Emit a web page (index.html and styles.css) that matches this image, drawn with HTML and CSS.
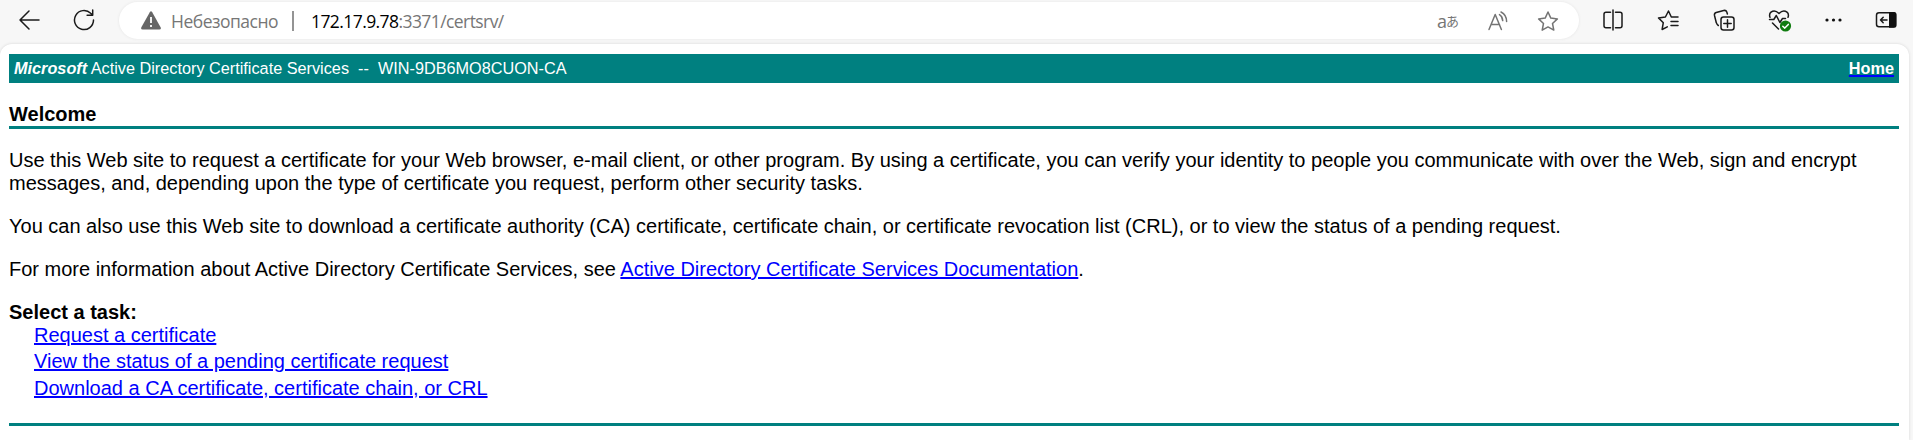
FILE: index.html
```
<!DOCTYPE html>
<html lang="ru">
<head>
<meta charset="utf-8">
<title>Microsoft Active Directory Certificate Services</title>
<link rel="stylesheet" href="styles.css">
</head>
<body>
<header class="toolbar">
  <svg class="icon back" viewBox="0 0 22 22"><path d="M21 11H2M11 2L2 11l9 9"/></svg>
  <svg class="icon reload" viewBox="0 0 22 22"><path d="M20.500 11A9.500 9.500 0 1 1 17.700 4.300L19.500 6M19.700 1v5.300h-5.600"/></svg>
  <div class="omnibox">
    <svg class="warning" viewBox="0 0 20 19"><path class="shape" d="M8.8 1.2Q10-.6 11.2 1.2L19.6 16.3Q20.5 18.5 18.3 18.5H1.7Q-.5 18.5.4 16.3Z"/><path class="mark" d="M10 6v6M10 14v2"/></svg>
    <span class="status">Небезопасно</span>
    <span class="divider"></span>
    <span class="url"><b class="host">172.17.9.78</b>:3371/certsrv/</span>
    <span class="translate"><span class="latin">a</span><span class="kana">あ</span></span>
    <svg class="icon soft read" viewBox="0 0 20 20"><path d="M1 18.5L7.200 3.500l6.200 15M3 13.500h8.500M11.500 3.600q3 1.700 3.200 6M13 1q5.600 2.800 5.600 9.600"/></svg>
    <svg class="icon soft star" viewBox="0 0 22 22"><path d="M11 2l2.800 6.100 6.600.8-4.900 4.600 1.300 6.600-5.800-3.200-5.800 3.200 1.300-6.600L1.600 8.900l6.600-.8Z"/></svg>
  </div>
  <div class="actions">
    <svg class="icon" viewBox="0 0 22 22"><path d="M11 1v20M8.500 3.200H4Q2 3.200 2 5.200v11.600q0 2 2 2h4.500M13.500 3.200H18q2 0 2 2v11.600q0 2-2 2h-4.500"/></svg>
    <svg class="icon" viewBox="0 0 22 22"><path d="M14.300 8L11.500 2 8.400 8 1.500 8.900l4.800 4.800-1.200 6.800 5.200-2.700M14.300 8H21M14 12.500h7M14 16.500h7"/></svg>
    <svg class="icon collections" viewBox="0 0 22 22"><rect x="8" y="8" width="13" height="13" rx="2.500"/><path d="M14.500 10.800v7.400M10.800 14.500h7.400M5.300 16.500Q3.700 15.500 3.300 13.700L1.500 6.500Q1 4.200 3.200 3.500l7.500-2q2.300-.6 3.100 1.500l.6 2"/></svg>
    <svg class="icon health" viewBox="0 0 24 24"><path d="M2 8.300Q.8 5 3 3.200q3.800-3 8 1.300 4.200-4.300 8-1.300 2.200 1.800 1 5.100M1.500 10.500h4.300l2.500-4 3.600 7 2.600-4h3M4.500 14l6 6"/><circle class="badge" cx="17.500" cy="17" r="5.600"/><path class="tick" d="M14.800 17.200l2 1.900 3.500-3.700"/></svg>
    <svg class="icon" viewBox="0 0 22 22"><g class="dots"><circle cx="4" cy="11" r="1.600"/><circle cx="10.500" cy="11" r="1.600"/><circle cx="17" cy="11" r="1.600"/></g></svg>
    <svg class="icon sidebar" viewBox="0 0 22 22"><rect x="1.500" y="3.800" width="19" height="14" rx="2.500"/><path class="dots" d="M14 3h5q2.500 0 2.500 2.500v10.700q0 2.500-2.500 2.500h-5Z"/><path d="M12 11H5.500M8.200 8.200L5.500 11l2.700 2.800"/></svg>
  </div>
</header>
<main class="page">
  <div class="banner">
    <span class="service"><b class="brand">Microsoft</b> Active Directory Certificate Services &nbsp;--&nbsp; WIN-9DB6MO8CUON-CA</span>
    <a class="home" href="#">Home</a>
  </div>
  <h1 class="title">Welcome</h1>
  <p class="intro">Use this Web site to request a certificate for your Web browser, e-mail client, or other program. By using a certificate, you can verify your identity to people you communicate with over the Web, sign and encrypt messages, and, depending upon the type of certificate you request, perform other security tasks.</p>
  <p>You can also use this Web site to download a certificate authority (CA) certificate, certificate chain, or certificate revocation list (CRL), or to view the status of a pending request.</p>
  <p>For more information about Active Directory Certificate Services, see <a href="#">Active Directory Certificate Services Documentation</a>.</p>
  <h2 class="tasks-title">Select a task:</h2>
  <ul class="tasks">
    <li><a href="#">Request a certificate</a></li>
    <li><a href="#">View the status of a pending certificate request</a></li>
    <li><a href="#">Download a CA certificate, certificate chain, or CRL</a></li>
  </ul>
</main>
</body>
</html>
```
FILE: styles.css
```
* { box-sizing: border-box; }
body { margin: 0; height: 440px; overflow: hidden; background: #f7f7f7; color: #000; font: 20px/23px "Liberation Sans", Arial, sans-serif; }
.toolbar { display: flex; height: 44px; padding: 2px 16px 5px 18px; }
.icon { display: block; width: 22px; height: 22px; flex: none; fill: none; stroke: #1b1b1b; stroke-width: 1.5; stroke-linecap: round; stroke-linejoin: round; }
.back { margin-top: 7px; }
.reload { margin: 7px 24px 0 33px; }
.omnibox { display: flex; align-items: center; width: 1460px; height: 37px; padding: 0 20px 0 22px; border-radius: 19px; background: #fff; box-shadow: 0 0 3px #e4e4e4; font: 17px/24px "Open Sans", "Noto Sans", sans-serif; color: #767676; white-space: nowrap; }
.warning { width: 20px; height: 19px; }
.warning .shape { fill: #666; }
.warning .mark { stroke: #fff; stroke-width: 1.8; }
.status { width: 106px; margin-left: 10px; font-size: 17.5px; letter-spacing: -.5px; }
.divider { width: 2px; height: 20px; margin-left: 15px; background: #949494; }
.url { margin-left: 17px; font-size: 17.5px; letter-spacing: -.58px; }
.host { font-weight: 400; color: #000; }
.translate { display: flex; align-items: center; margin-left: auto; margin-right: 29px; }
.latin { font-size: 18px; }
.kana { font: 13px/24px "Noto Sans CJK JP", sans-serif; margin-left: -1px; }
.soft { stroke: #747474; }
.read { width: 20px; height: 20px; margin-right: 29px; }
.actions { display: flex; gap: 33px; margin: 7px 0 0 auto; }
.collections { margin-left: 1px; }
.health { width: 24px; height: 24px; margin-right: -2px; }
.sidebar { margin-left: -3px; }
.badge { fill: #107c10; stroke: none; }
.tick { stroke: #fff; }
.dots { fill: #111; stroke: none; }
.page { width: 1909px; height: 396px; padding: 10px 10px 0 9px; border-radius: 12px 12px 0 0; background: #fff; box-shadow: 0 0 3px #d4d4d4; }
.banner { display: flex; justify-content: space-between; height: 29px; padding: 0 5px; background: #008080; color: #fff; font-size: 16.25px; line-height: 29px; }
.home { color: #fff; font-weight: 700; text-decoration-color: #00f; text-decoration-thickness: 2px; text-decoration-skip-ink: none; }
.title { margin: 0; padding-top: 20px; height: 46px; border-bottom: 3px solid #008080; font-size: 20px; line-height: 23px; }
.brand { font-style: italic; }
p { margin: 0 0 20px; }
.intro { margin-top: 20px; }
a { color: #00f; text-decoration-thickness: 2px; }
.tasks-title { margin: 0; font-size: 20px; line-height: 23px; }
.tasks { display: grid; row-gap: 3.4px; margin: 0; padding: 0 0 23px 25px; list-style: none; border-bottom: 3px solid #008080; }
```
